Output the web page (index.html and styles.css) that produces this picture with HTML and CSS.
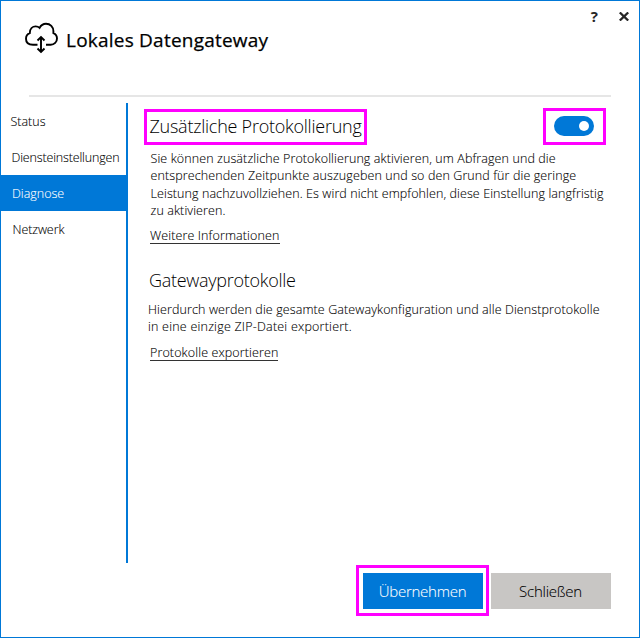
FILE: index.html
```html
<!DOCTYPE html>
<html lang="de">
<head>
<meta charset="utf-8">
<title>Lokales Datengateway</title>
<link rel="stylesheet" href="styles.css">
</head>
<body>
<div class="window">
  <header class="header">
    <svg class="logo" width="36" height="34" viewBox="0 0 36 34" fill="none" stroke="#000" stroke-width="1.900">
      <path d="M13.500 22.700H9C4.500 22.700 2 20.200 2 16.700c0-2.700 1.500-4.700 3.800-5.600C5.800 7 8.500 4.400 11.700 4.400c1.500 0 2.800.5 3.900 1.500C17 3.200 19.200 1.800 22 1.800c4.300 0 7.400 3.200 7.400 7.500v1.800c2.300 1 3.600 3 3.600 5.400 0 3.500-2.700 6.200-6.300 6.200H22"/>
      <path d="M17 15v15M13.500 18.500L17 15l3.500 3.500M13.500 26.500L17 30l3.500-3.500"/>
    </svg>
    <h1 class="title">Lokales Datengateway</h1>
    <div class="controls">
      <span class="help">?</span>
      <svg width="10" height="9" viewBox="0 0 10 9" fill="none" stroke="#262626" stroke-width="2.300"><path d="M.8.5l8.400 8M9.200.5L.8 8.500"/></svg>
    </div>
  </header>
  <div class="body">
    <nav class="nav">
      <a class="item status">Status</a>
      <a class="item settings">Diensteinstellungen</a>
      <a class="item active">Diagnose</a>
      <a class="item network">Netzwerk</a>
    </nav>
    <main class="content">
      <div class="heading-row">
        <h2 class="heading marked logging">Zusätzliche Protokollierung</h2>
        <div class="marked toggle-box"><div class="toggle"><span class="knob"></span></div></div>
      </div>
      <p class="text first">Sie können zusätzliche Protokollierung aktivieren, um Abfragen und die<br>entsprechenden Zeitpunkte auszugeben und so den Grund für die geringe<br><span class="narrow">Leistung nachzuvollziehen. Es wird nicht empfohlen, diese Einstellung langfristig</span><br>zu aktivieren.</p>
      <a class="link more">Weitere Informationen</a>
      <h2 class="heading gateway">Gatewayprotokolle</h2>
      <p class="text second">Hierdurch werden die gesamte Gatewaykonfiguration und alle Dienstprotokolle<br><span class="wide">in eine einzige ZIP-Datei exportiert.</span></p>
      <a class="link export">Protokolle exportieren</a>
    </main>
  </div>
  <footer class="footer">
    <div class="marked apply-box"><button class="button apply">Übernehmen</button></div>
    <button class="button close">Schließen</button>
  </footer>
</div>
</body>
</html>
```
FILE: styles.css
```css
* { box-sizing: border-box; }
body { margin: 0; font-family: "Open Sans", "Noto Sans", sans-serif; font-weight: 300; color: #000; }
h1, h2, p { margin: 0; }
.window { width: 640px; height: 638px; border: 1px solid #0078d7; background: #fff; display: flex; flex-direction: column; white-space: nowrap; }
.header { height: 96px; margin: 0 28px; border-bottom: 2px solid #e6e6e6; display: flex; align-items: flex-start; }
.logo { margin: 21px 0 0 -5px; }
.title { font-size: 19px; line-height: 28px; font-weight: 400; letter-spacing: .22px; margin: 25px 0 0 6px; -webkit-text-stroke: .25px #000; }
.controls { display: flex; align-items: center; gap: 21px; margin: 7px -18px 0 auto; }
.help { font-size: 15px; line-height: 16px; font-weight: 700; color: #262626; }
.body { display: flex; height: 460px; margin-top: 6px; }
.nav { width: 127px; border-right: 2px solid #0078d7; }
.item { display: block; height: 36px; line-height: 37px; font-size: 12.5px; padding-left: 10px; -webkit-text-stroke: .1px; }
.status { padding-left: 9.5px; }
.settings { padding-left: 10.5px; letter-spacing: -.16px; }
.active { background: #0078d7; color: #fff; padding-left: 11px; }
.network { padding-left: 11.5px; letter-spacing: -.1px; }
.content { display: flex; flex-direction: column; align-items: flex-start; flex: 1; padding: 5px 33px 0 16px; }
.marked { border: 3px solid #f0f; }
.heading-row { display: flex; justify-content: space-between; width: 462px; height: 37px; }
.heading { font-size: 18px; font-weight: 300; line-height: 26px; letter-spacing: -.28px; }
.logging { width: 223px; height: 36px; margin-top: 1px; padding-left: 2.5px; line-height: 29px; letter-spacing: -.25px; }
.toggle-box { width: 63px; height: 37px; padding: 5px 8px; }
.toggle { width: 40px; height: 20px; border-radius: 10px; background: #0078d7; display: flex; align-items: center; justify-content: flex-end; padding-right: 5px; }
.knob { width: 10px; height: 10px; border-radius: 50%; background: #fff; }
.text { font-size: 12.5px; line-height: 17.400px; letter-spacing: .108px; -webkit-text-stroke: .1px; }
.narrow { letter-spacing: .092px; }
.wide { letter-spacing: .22px; }
.first { margin: 5px 0 0 6.5px; }
.link { font-size: 12.5px; line-height: 15px; height: 16px; border-bottom: 1px solid #333; margin-left: 6px; letter-spacing: .12px; -webkit-text-stroke: .1px; }
.more { margin-top: 8px; width: 130px; }
.gateway { margin: 23px 0 0 5px; }
.second { margin: 8px 0 0 4px; }
.export { margin-top: 10px; width: 128px; }
.footer { display: flex; align-items: flex-start; margin: 2px 28px 0 auto; }
.apply-box { width: 133px; height: 51px; padding: 5px 3px 5px 4px; }
.button { display: block; width: 120px; height: 36px; border: 0; padding: 0 1px 0 0; font: 300 15px/36px "Open Sans", sans-serif; letter-spacing: -.25px; -webkit-text-stroke: .1px; }
.apply { background: #0078d7; color: #fff; }
.close { background: #c8c6c4; color: #000; margin: 8px 0 0 2px; }
```
